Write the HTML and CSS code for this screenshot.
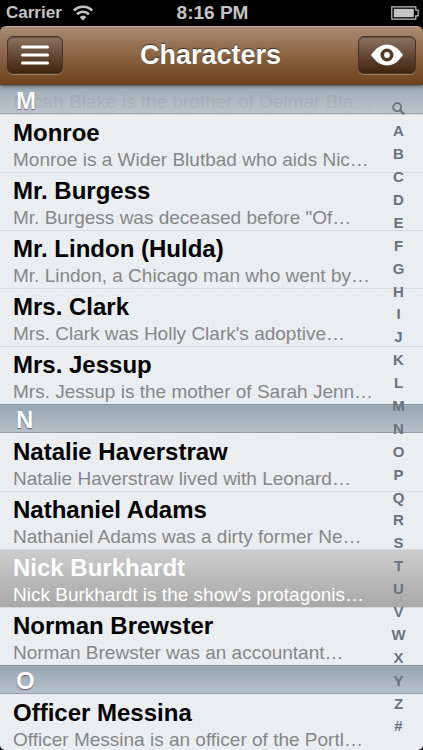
FILE: index.html
```html
<!DOCTYPE html>
<html lang="en">
<head>
    <meta charset="UTF-8">
    <meta name="viewport" content="width=device-width, initial-scale=1.0">
    <title>Characters</title>
    <link rel="stylesheet" href="styles.css">
</head>
<body>
    <div class="status-bar">
        <div class="carrier">
            <span>Carrier</span>
            <svg class="wifi" viewBox="0 0 20 16" aria-hidden="true">
                <path d="M.8 5.6a13 13 0 0 1 18.4 0M4.1 9.2a8.4 8.4 0 0 1 11.8 0" fill="none" stroke="#c4c4c4" stroke-width="2.6"/>
                <path d="M6.6 12a5 5 0 0 1 6.8 0L10 15.6z" fill="#c4c4c4"/>
            </svg>
        </div>
        <span class="time">8:16 PM</span>
        <svg class="battery" viewBox="0 0 28 14" aria-hidden="true">
            <path d="M.8.8h24v3.4h2.4v5.6h-2.4v3.4H.8z" fill="none" stroke="#c4c4c4" stroke-width="1.2"/>
            <path d="M2.8 2.8h20v8.4h-20z" fill="#c4c4c4"/>
        </svg>
    </div>

    <header class="nav-bar">
        <button class="nav-button" type="button" aria-label="Menu">
            <svg class="menu-icon" viewBox="0 0 28 20">
                <path d="M1.5 2h25M1.5 10h25M1.5 18h25" stroke="#fff" stroke-width="3" stroke-linecap="round"/>
            </svg>
        </button>
        <h1>Characters</h1>
        <button class="nav-button" type="button" aria-label="View">
            <svg class="eye-icon" viewBox="0 0 32 22">
                <path d="M0 11C5 4 10 .5 16 .5S27 4 32 11C27 18 22 21.5 16 21.5S5 18 0 11z" fill="#fff"/>
                <circle cx="16" cy="11" r="4.7" fill="#fff" stroke="#533a26" stroke-width="3.6"/>
            </svg>
        </button>
    </header>

    <main class="panel">
        <div class="list">
            <h2 class="section-title floating">M</h2>
            <ul class="first">
                <li><strong>Micah Blake</strong><span>Micah Blake is the brother of Delmar Bla…</span></li>
                <li><strong>Monroe</strong><span>Monroe is a Wider Blutbad who aids Nic…</span></li>
                <li><strong>Mr. Burgess</strong><span>Mr. Burgess was deceased before "Of…</span></li>
                <li><strong>Mr. Lindon (Hulda)</strong><span>Mr. Lindon, a Chicago man who went by…</span></li>
                <li><strong>Mrs. Clark</strong><span>Mrs. Clark was Holly Clark's adoptive…</span></li>
                <li><strong>Mrs. Jessup</strong><span>Mrs. Jessup is the mother of Sarah Jenn…</span></li>
            </ul>
            <h2 class="section-title">N</h2>
            <ul>
                <li><strong>Natalie Haverstraw</strong><span>Natalie Haverstraw lived with Leonard…</span></li>
                <li><strong>Nathaniel Adams</strong><span>Nathaniel Adams was a dirty former Ne…</span></li>
                <li class="selected"><strong>Nick Burkhardt</strong><span>Nick Burkhardt is the show's protagonis…</span></li>
                <li><strong>Norman Brewster</strong><span>Norman Brewster was an accountant…</span></li>
            </ul>
            <h2 class="section-title">O</h2>
            <ul>
                <li><strong>Officer Messina</strong><span>Officer Messina is an officer of the Portl…</span></li>
            </ul>
        </div>

        <nav class="index" aria-label="Index">
            <a href="#" aria-label="Search">
                <svg class="search-icon" viewBox="0 0 13 13">
                    <circle cx="5.2" cy="5.2" r="4" fill="none" stroke="#69737d" stroke-width="1.8"/>
                    <path d="M8.2 8.2l4 4" stroke="#69737d" stroke-width="2.2"/>
                </svg>
            </a>
            <a href="#">A</a>
            <a href="#">B</a>
            <a href="#">C</a>
            <a href="#">D</a>
            <a href="#">E</a>
            <a href="#">F</a>
            <a href="#">G</a>
            <a href="#">H</a>
            <a href="#">I</a>
            <a href="#">J</a>
            <a href="#">K</a>
            <a href="#">L</a>
            <a href="#">M</a>
            <a href="#">N</a>
            <a href="#">O</a>
            <a href="#">P</a>
            <a href="#">Q</a>
            <a href="#">R</a>
            <a href="#">S</a>
            <a href="#">T</a>
            <a href="#">U</a>
            <a href="#">V</a>
            <a href="#">W</a>
            <a href="#">X</a>
            <a href="#">Y</a>
            <a href="#">Z</a>
            <a href="#">#</a>
        </nav>
    </main>
</body>
</html>
```
FILE: styles.css
```css
* {
    box-sizing: border-box;
}
body {
    margin: 0;
    height: 100vh;
    display: flex;
    flex-direction: column;
    background: #000;
    font-family: "Liberation Sans", Arial, sans-serif;
    overflow: hidden;
}
h1, h2, ul {
    margin: 0;
    padding: 0;
}

/* status bar */
.status-bar {
    display: grid;
    grid-template-columns: 1fr auto 1fr;
    align-items: center;
    height: 26px;
    padding: 0 4px 0 6px;
    color: #c4c4c4;
    font-size: 17px;
    font-weight: bold;
}
.carrier {
    display: flex;
    align-items: center;
    gap: 11px;
}
.time {
    font-size: 19px;
}
.wifi {
    width: 20px;
    height: 16px;
}
.battery {
    width: 28px;
    height: 14px;
    justify-self: end;
}

/* navigation bar */
.nav-bar {
    position: relative;
    z-index: 2;
    display: flex;
    align-items: center;
    justify-content: space-between;
    height: 59px;
    padding: 0 7px 1px;
    border-top: 1px solid #c0aa98;
    border-bottom: 1px solid #5b4330;
    border-radius: 6px 6px 0 0;
    background: linear-gradient(#a98b73, #8b6342 50%, #6d421c);
    box-shadow: 0 1px 4px rgba(0, 0, 0, 0.6);
}
h1 {
    color: #fff;
    font-size: 27px;
    line-height: 32px;
    text-shadow: 0 -1px 1px rgba(0, 0, 0, 0.6);
}
.nav-button {
    display: flex;
    align-items: center;
    justify-content: center;
    width: 56px;
    height: 38px;
    padding: 0;
    border: 1px solid #493526;
    border-radius: 6px;
    background: linear-gradient(#8c7462, #644a37 50%, #40260f);
    box-shadow: 0 1px 0 rgba(255, 255, 255, 0.25), inset 0 1px 1px rgba(0, 0, 0, 0.3);
}
.nav-button:last-child {
    width: 58px;
}
.menu-icon {
    width: 28px;
    height: 20px;
}
.eye-icon {
    width: 32px;
    height: 22px;
}

/* character list */
.panel {
    position: relative;
    flex: 1;
    min-height: 0;
    overflow: hidden;
    border-radius: 0 0 5px 5px;
    background:
        repeating-linear-gradient(90deg, rgba(255, 255, 255, 0.12) 0 1px, transparent 1px 5px),
        repeating-linear-gradient(rgba(255, 255, 255, 0.12) 0 1px, transparent 1px 4px),
        #e9edf0;
}
.first {
    margin-top: -29px;
}
li {
    display: flex;
    flex-direction: column;
    height: 58px;
    padding: 4px 56px 0 13px;
    border-top: 1px solid #d6dadd;
    white-space: nowrap;
}
li:first-child {
    border-top-color: transparent;
}
li strong {
    color: #000;
    font-size: 24px;
    line-height: 28px;
}
li span {
    color: #858789;
    font-size: 19px;
    line-height: 26px;
}
.selected {
    background: linear-gradient(#cdcdcd, #a8a8a8);
}
.selected strong,
.selected span {
    color: #fff;
}
.section-title {
    height: 29px;
    padding-left: 16px;
    border-top: 1px solid #83909b;
    border-bottom: 1px solid #929ea8;
    background: linear-gradient(#97a5b1, #b6c0c9);
    box-shadow: inset 0 1px 0 #a6b2bc;
    color: #fff;
    font-size: 24px;
    line-height: 29px;
    text-shadow: 0 1px 1px rgba(0, 0, 0, 0.5);
}
.floating {
    position: absolute;
    top: 0;
    left: 0;
    right: 0;
    opacity: 0.9;
}

/* letter index on the right edge */
.index {
    position: absolute;
    top: 0;
    right: 0;
    bottom: 0;
    display: flex;
    flex-direction: column;
    width: 49px;
    padding: 12px 0;
}
.index a {
    flex: 1;
    display: flex;
    align-items: center;
    justify-content: center;
    color: #69737d;
    font-size: 15px;
    font-weight: bold;
    line-height: 16px;
    text-decoration: none;
}
.search-icon {
    width: 13px;
    height: 13px;
}
```
